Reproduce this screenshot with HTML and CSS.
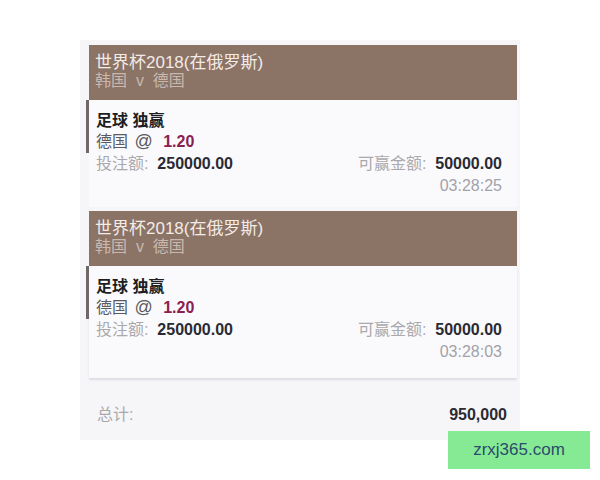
FILE: index.html
```html
<!DOCTYPE html>
<html lang="zh">
  <head>
    <meta charset="utf-8" />
    <title>投注记录</title>
    <link rel="stylesheet" href="styles.css">
  </head>
  <body>
    <div class="panel">
      <div class="bet">
        <div class="bet-head">
          <div class="league">世界杯2018(在俄罗斯)</div>
          <div class="match">韩国 &nbsp;v&nbsp; 德国</div>
        </div>
        <div class="bet-body">
          <div class="pick">
            <div class="market">足球 独赢</div>
            <div class="selection">德国 <span class="at">@</span> <span class="odds">1.20</span></div>
          </div>
          <div class="amounts">
            <div><span class="label">投注额:</span> &nbsp;<span class="value">250000.00</span></div>
            <div><span class="label">可赢金额:</span> &nbsp;<span class="value">50000.00</span></div>
          </div>
          <div class="time">03:28:25</div>
        </div>
      </div>
      <div class="bet">
        <div class="bet-head">
          <div class="league">世界杯2018(在俄罗斯)</div>
          <div class="match">韩国 &nbsp;v&nbsp; 德国</div>
        </div>
        <div class="bet-body last">
          <div class="pick">
            <div class="market">足球 独赢</div>
            <div class="selection">德国 <span class="at">@</span> <span class="odds">1.20</span></div>
          </div>
          <div class="amounts">
            <div><span class="label">投注额:</span> &nbsp;<span class="value">250000.00</span></div>
            <div><span class="label">可赢金额:</span> &nbsp;<span class="value">50000.00</span></div>
          </div>
          <div class="time">03:28:03</div>
        </div>
      </div>
      <div class="total">
        <span class="label">总计:</span>
        <span class="value">950,000</span>
      </div>
    </div>
    <div class="watermark">zrxj365.com</div>
  </body>
</html>
```

FILE: styles.css
```css
body {
  margin: 0;
  background: #ffffff;
  font-family: "Liberation Sans", "Noto Sans CJK SC", sans-serif;
  font-size: 16px;
}
.panel {
  margin: 40px 0 0 80px;
  width: 440px;
  height: 400px;
  box-sizing: border-box;
  padding: 5px 3px 0 9px;
  background: #f6f6f9;
}
.bet {
  margin-bottom: 4px;
}
.bet-head {
  background: #8b7366;
  height: 55px;
  box-sizing: border-box;
  padding: 9px 6px 0 6px;
  line-height: 18px;
}
.league {
  color: #f3ebe6;
  font-size: 17px;
}
.match {
  color: #c9b8ae;
  font-size: 16px;
}
.bet-body {
  background: #fafafc;
  height: 107px;
  padding: 0 15px 0 7px;
  box-sizing: border-box;
}
.bet-body.last {
  height: 112px;
  box-shadow: 0 2px 2px #dcdce4;
}
.pick {
  border-left: 3px solid #6e6868;
  margin-left: -10px;
  padding-left: 7px;
  padding-top: 10px;
  height: 43px;
  line-height: 21px;
}
.market {
  font-weight: bold;
  color: #1e1e22;
}
.selection {
  color: #5a5a60;
}
.at {
  font-size: 18px;
  margin: 0 6px 0 2px;
}
.odds {
  color: #8a2052;
  font-weight: bold;
}
.amounts {
  display: flex;
  justify-content: space-between;
  line-height: 22px;
}
.label {
  color: #a9a9ad;
}
.value {
  color: #2a2a33;
  font-weight: bold;
}
.time {
  text-align: right;
  color: #a2a2a8;
  line-height: 22px;
}
.total {
  display: flex;
  justify-content: space-between;
  padding: 23px 10px 0 8px;
  line-height: 20px;
}
.watermark {
  position: absolute;
  left: 448px;
  top: 431px;
  width: 142px;
  height: 38px;
  background: #86ea95;
  color: #2b4c6c;
  font-size: 17px;
  line-height: 38px;
  text-align: center;
}
```
